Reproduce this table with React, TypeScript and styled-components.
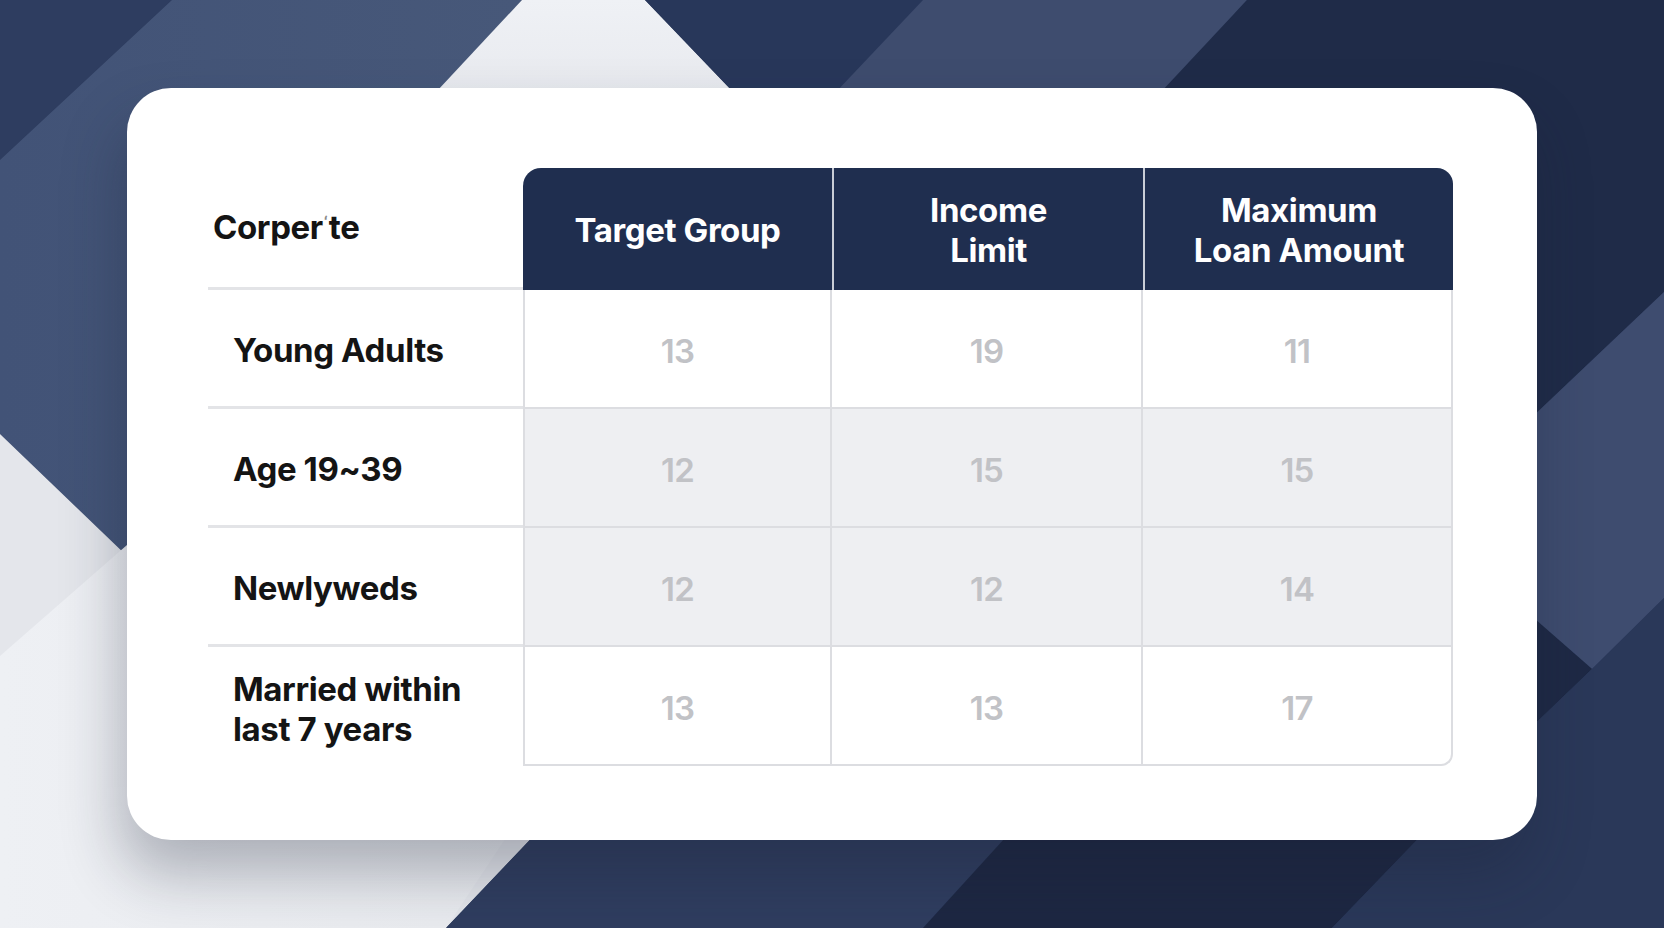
import React from "react";
import styled, { createGlobalStyle } from "styled-components";

const Global = createGlobalStyle`
  html, body { margin: 0; padding: 0; }
  body { font-family: Inter, "Noto Sans", Arial, sans-serif; }
  * { box-sizing: border-box; }
`;

const Page = styled.div`
  position: relative;
  width: 1664px;
  height: 928px;
  overflow: hidden;
  display: flex;
  align-items: center;
  justify-content: center;
  background: #2c3a5c;
`;

const Backdrop = styled.svg`
  position: absolute;
  inset: 0;
  width: 100%;
  height: 100%;
  z-index: 0;
`;

const Card = styled.div`
  position: relative;
  z-index: 1;
  width: 1410px;
  padding: 80px 84px 74px 81px;
  background: #ffffff;
  border-radius: 44px;
  box-shadow: -6px 34px 60px rgba(25, 32, 52, 0.3);
`;

const Table = styled.div`
  display: grid;
  grid-template-columns: 315px 309px 311px 310px;
  grid-template-rows: 122px repeat(4, 119px);
`;

const Text = styled.span`
  font-family: Inter, "Noto Sans", Arial, sans-serif;
  font-weight: 700;
  font-size: 33px;
  letter-spacing: -0.4px;
  line-height: 40px;
`;

const CornerLabel = styled.div`
  display: flex;
  align-items: center;
  padding-left: 5px;
  padding-bottom: 6px;
  border-bottom: 3px solid #e3e4e7;
  color: #141414;
`;

const Mark = styled.span`
  display: inline-block;
  font-size: 15px;
  color: #8a8a8a;
  vertical-align: 12px;
  margin: 0 1px;
`;

const HeadCell = styled.div<{ $first?: boolean; $last?: boolean }>`
  display: flex;
  align-items: center;
  justify-content: center;
  text-align: center;
  padding-top: 2px;
  background: #1f2e4f;
  color: #ffffff;
  border-left: ${(p) => (p.$first ? "none" : "2px solid #c9cdd6")};
  border-top-left-radius: ${(p) => (p.$first ? "18px" : "0")};
  border-top-right-radius: ${(p) => (p.$last ? "16px" : "0")};
`;

const RowLabel = styled.div<{ $last?: boolean }>`
  display: flex;
  align-items: center;
  padding-left: 25px;
  padding-top: 4px;
  color: #141414;
  border-bottom: ${(p) => (p.$last ? "none" : "3px solid #e3e4e7")};
`;

const DataCell = styled.div<{ $shade?: boolean; $first?: boolean; $corner?: boolean }>`
  display: flex;
  align-items: center;
  justify-content: center;
  padding-top: 4px;
  background: ${(p) => (p.$shade ? "#eeeff2" : "#ffffff")};
  border-right: 2px solid #dcdde1;
  border-bottom: 2px solid #dcdde1;
  border-left: ${(p) => (p.$first ? "2px solid #dcdde1" : "none")};
  border-bottom-right-radius: ${(p) => (p.$corner ? "12px" : "0")};
`;

const Num = styled.span`
  font-family: Inter, "Noto Sans", Arial, sans-serif;
  font-weight: 600;
  font-size: 33px;
  color: #c1c2c6;
  letter-spacing: -0.8px;
`;

const headers: React.ReactNode[] = [
  "Target Group",
  <>
    Income
    <br />
    Limit
  </>,
  <>
    Maximum
    <br />
    Loan Amount
  </>,
];

const rows: { label: React.ReactNode; values: string[]; shade: boolean }[] = [
  { label: "Young Adults", values: ["13", "19", "11"], shade: false },
  { label: "Age 19~39", values: ["12", "15", "15"], shade: true },
  { label: "Newlyweds", values: ["12", "12", "14"], shade: true },
  {
    label: (
      <>
        Married within
        <br />
        last 7 years
      </>
    ),
    values: ["13", "13", "17"],
    shade: false,
  },
];

function Background() {
  return (
    <Backdrop viewBox="0 0 1664 928" preserveAspectRatio="none">
      <defs>
        <linearGradient id="lightTop" x1="0" y1="0" x2="0" y2="1">
          <stop offset="0" stopColor="#eff1f5" />
          <stop offset="1" stopColor="#e6e8ed" />
        </linearGradient>
        <linearGradient id="lightBottom" x1="0" y1="0" x2="1" y2="0">
          <stop offset="0" stopColor="#eef0f4" />
          <stop offset="1" stopColor="#e6e8ec" />
        </linearGradient>
        <linearGradient id="bandA" x1="0" y1="0" x2="1" y2="0">
          <stop offset="0" stopColor="#425377" />
          <stop offset="1" stopColor="#475879" />
        </linearGradient>
      </defs>
      <polygon points="0,0 172,0 0,160" fill="#2e3d60" />
      <polygon points="172,0 522,0 127,432 127,556 0,434 0,160" fill="url(#bandA)" />
      <polygon points="522,0 645,0 760,120 410,120" fill="url(#lightTop)" />
      <polygon points="645,0 923,0 820,120 760,120" fill="#28375a" />
      <polygon points="923,0 1247,0 1130,130 800,130" fill="#3e4c6e" />
      <polygon points="1247,0 1664,0 1664,292 1450,495 1060,200" fill="#1f2b48" />
      <polygon points="1664,292 1664,598 1592,669 1450,545 1450,495" fill="#3e4c6f" />
      <polygon points="1450,545 1592,669 1450,805" fill="#1e2945" />
      <polygon points="1592,669 1664,598 1664,928 1300,928 1450,805" fill="#2a3859" />
      <polygon points="0,434 127,556 800,556 446,928 0,928" fill="#e4e6eb" />
      <polygon points="0,656 127,545 700,545 446,928 0,928" fill="url(#lightBottom)" />
      <polygon points="606,760 1076,760 923,928 446,928" fill="#2f3d5f" />
      <polygon points="1076,760 1494,760 1332,928 923,928" fill="#1d2742" />
      <polygon points="1494,760 1664,760 1664,928 1332,928" fill="#2a3859" />
    </Backdrop>
  );
}

export default function App() {
  return (
    <>
      <Global />
      <Page>
        <Background />
        <Card>
          <Table>
            <CornerLabel>
              <Text>
                Corper<Mark>ʻ</Mark>te
              </Text>
            </CornerLabel>
            {headers.map((h, i) => (
              <HeadCell key={i} $first={i === 0} $last={i === headers.length - 1}>
                <Text>{h}</Text>
              </HeadCell>
            ))}
            {rows.map((r, ri) => (
              <React.Fragment key={ri}>
                <RowLabel $last={ri === rows.length - 1}>
                  <Text>{r.label}</Text>
                </RowLabel>
                {r.values.map((v, ci) => (
                  <DataCell
                    key={ci}
                    $shade={r.shade}
                    $first={ci === 0}
                    $corner={ri === rows.length - 1 && ci === r.values.length - 1}
                  >
                    <Num>{v}</Num>
                  </DataCell>
                ))}
              </React.Fragment>
            ))}
          </Table>
        </Card>
      </Page>
    </>
  );
}
